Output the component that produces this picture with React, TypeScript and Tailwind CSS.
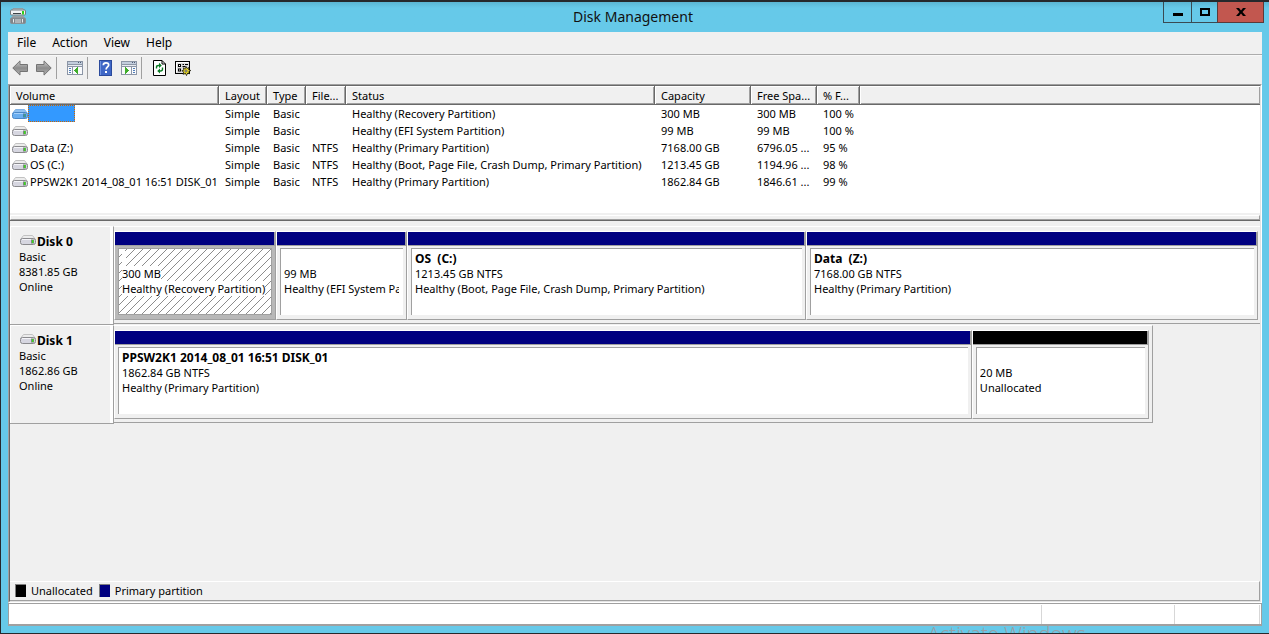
import type { ReactNode } from "react";
import { clsx } from "clsx";

const MENUS = ["File", "Action", "View", "Help"] as const;

const COLUMNS = [
  { label: "Volume", width: "w-[209px]" },
  { label: "Layout", width: "w-[48px]" },
  { label: "Type", width: "w-[39px]" },
  { label: "File...", width: "w-[40px]" },
  { label: "Status", width: "w-[309px]" },
  { label: "Capacity", width: "w-[96px]" },
  { label: "Free Spa...", width: "w-[66px]" },
  { label: "% F...", width: "w-[43px]" },
] as const;

const VOLUMES = [
  { name: "", cells: ["Simple", "Basic", "", "Healthy (Recovery Partition)", "300 MB", "300 MB", "100 %"], selected: true },
  { name: "", cells: ["Simple", "Basic", "", "Healthy (EFI System Partition)", "99 MB", "99 MB", "100 %"] },
  { name: "Data (Z:)", cells: ["Simple", "Basic", "NTFS", "Healthy (Primary Partition)", "7168.00 GB", "6796.05 ...", "95 %"] },
  { name: "OS (C:)", cells: ["Simple", "Basic", "NTFS", "Healthy (Boot, Page File, Crash Dump, Primary Partition)", "1213.45 GB", "1194.96 ...", "98 %"] },
  { name: "PPSW2K1 2014_08_01 16:51 DISK_01", cells: ["Simple", "Basic", "NTFS", "Healthy (Primary Partition)", "1862.84 GB", "1846.61 ...", "99 %"] },
];

type Partition = {
  name?: string;
  size: string;
  status: string;
  grow: string;
  selected?: boolean;
  unallocated?: boolean;
};

type Disk = {
  name: string;
  size: string;
  width: string;
  partitions: Partition[];
};

const DISKS: Disk[] = [
  {
    name: "Disk 0",
    size: "8381.85 GB",
    width: "w-full pr-[2px]",
    partitions: [
      { size: "300 MB", status: "Healthy (Recovery Partition)", grow: "grow-160", selected: true },
      { size: "99 MB", status: "Healthy (EFI System Partition)", grow: "grow-129" },
      { name: "OS  (C:)", size: "1213.45 GB NTFS", status: "Healthy (Boot, Page File, Crash Dump, Primary Partition)", grow: "grow-397" },
      { name: "Data  (Z:)", size: "7168.00 GB NTFS", status: "Healthy (Primary Partition)", grow: "grow-450" },
    ],
  },
  {
    name: "Disk 1",
    size: "1862.86 GB",
    width: "w-[90.7%] border-r border-r-[#a0a0a0] pr-[3px]",
    partitions: [
      { name: "PPSW2K1 2014_08_01 16:51 DISK_01", size: "1862.84 GB NTFS", status: "Healthy (Primary Partition)", grow: "grow-858" },
      { size: "20 MB", status: "Unallocated", grow: "grow-176", unallocated: true },
    ],
  },
];

function DriveIcon({ selected = false }: { selected?: boolean }) {
  return (
    <svg width="16" height="10" viewBox="0 0 16 10" className="shrink-0" aria-hidden="true">
      <path d="M3.500 .5h9l3 4H.5z" fill={selected ? "#8fc0f0" : "#ececec"} stroke={selected ? "#7fb2e6" : "#c2c2c2"} strokeLinejoin="round" />
      <rect x=".5" y="3.500" width="15" height="6" rx="2" fill={selected ? "#6aaef0" : "#d6d6e0"} stroke={selected ? "#4a88c8" : "#8a8a8e"} />
      <path d="M2 4.500h12" stroke={selected ? "#a5d0fa" : "#f4f4f8"} />
      <rect x="11" y="4.500" width="3" height="4" fill={selected ? "#4a7fb0" : "#7d8a80"} />
      <rect x="12" y="5" width="1.500" height="3" fill={selected ? "#3da38a" : "#3bd51f"} />
    </svg>
  );
}

function AppIcon() {
  return (
    <svg width="16" height="16" viewBox="0 0 16 16" aria-hidden="true">
      <path d="M3 .5h10l2 2.500H1z" fill="#c9ced2" stroke="#8b9298" strokeWidth=".8" />
      <rect x=".5" y="2" width="15" height="5" rx="1" fill="#f2f3f5" stroke="#747a7e" />
      <path d="M3 5.500h8" stroke="#3d4347" />
      <rect x="12" y="3" width="2" height="3.500" fill="#2fd01c" />
      <path d="M3 7.500h10l2 2.500H1z" fill="#9ba0a4" />
      <rect x=".5" y="10" width="15" height="5.500" rx="1" fill="#7f858a" stroke="#8a9095" />
      <path d="M5 12h6M5 14h6" stroke="#dfe3e6" />
      <path d="M3.500 11v3.500M12.500 11v3.500" stroke="#e9ecee" />
    </svg>
  );
}

function ArrowIcon({ forward = false }: { forward?: boolean }) {
  return (
    <svg width="16" height="16" viewBox="0 0 16 16" className={clsx("shrink-0", forward && "-scale-x-100")} aria-hidden="true">
      <defs>
        <linearGradient id={forward ? "fwd" : "back"} x1="0" y1="0" x2="0" y2="1">
          <stop offset="0" stopColor="#d0d0d0" />
          <stop offset=".5" stopColor="#8c8c8c" />
          <stop offset="1" stopColor="#b4b4b4" />
        </linearGradient>
      </defs>
      <path d="M.8 8 8 .9v3.600h7.500v7H8v3.600z" fill={forward ? "url(#fwd)" : "url(#back)"} stroke="#747474" strokeLinejoin="round" />
    </svg>
  );
}

function PaneIcon({ right = false }: { right?: boolean }) {
  return (
    <svg width="16" height="14" viewBox="0 0 16 14" shapeRendering="crispEdges" aria-hidden="true">
      <rect width="16" height="14" fill="#8c96a6" />
      <rect x="1" y="1" width="14" height="2" fill="#c3cedd" />
      <path d="M11 1h1v1h-1zM13 1h1v1h-1z" fill="#4d5c74" />
      <rect x="1" y="4" width="14" height="1" fill="#e8ecf2" />
      <rect x="1" y="6" width="14" height="7" fill="#f9fafc" />
      {right ? (
        <>
          <path d="M10 6h1v7h-1z" fill="#8c96a6" />
          <path d="M12 7h2v1h-2zM12 9h2v1h-2zM12 11h2v1h-2z" fill="#4f7db8" />
          <path d="M4 6v7l4-3.500z" fill="#3fae2a" />
        </>
      ) : (
        <>
          <path d="M5 6h1v7H5z" fill="#8c96a6" />
          <path d="M2 7h2v1H2zM2 9h2v1H2zM2 11h2v1H2z" fill="#4f7db8" />
          <path d="M11 6v7L7 9.500z" fill="#3fae2a" />
        </>
      )}
    </svg>
  );
}

function HelpIcon() {
  return (
    <svg width="13" height="16" viewBox="0 0 13 16" aria-hidden="true">
      <rect x=".5" y=".5" width="12" height="15" fill="#3f67c6" stroke="#2b4a9c" />
      <path d="M1.500 1v14" stroke="#6f92e0" />
      <path d="M4.300 5.200c0-1.500 1-2.400 2.700-2.400s2.700.8 2.700 2.100c0 1.900-2.600 2-2.600 4.600" fill="none" stroke="#fff" strokeWidth="1.700" />
      <rect x="6" y="11" width="2" height="2" fill="#fff" />
    </svg>
  );
}

function RefreshIcon() {
  return (
    <svg width="13" height="16" viewBox="0 0 13 16" aria-hidden="true">
      <path d="M.5.5h8.500l3.500 3.500v11.500H.5z" fill="#fff" stroke="#000" />
      <path d="M9 .5V4h3.500" fill="none" stroke="#000" />
      <path d="M3.500 8.500V7.200c0-1.200.7-1.700 2-1.700H7M9.500 7.500v1.600c0 1.200-.7 1.900-2 1.900H6" fill="none" stroke="#0b7d24" strokeWidth="1.400" />
      <path d="M6 2.800v5.200l2.800-2.600zM7 8.400v5.200L4.200 11z" fill="#0b7d24" />
    </svg>
  );
}

function SettingsIcon() {
  return (
    <svg width="16" height="16" viewBox="0 0 16 16" aria-hidden="true">
      <rect x=".5" y="1.500" width="14" height="12" fill="#dcdcdc" stroke="#000" />
      <path d="M1.500 12.500v-10h12" fill="none" stroke="#fff" />
      <path d="M3 4h3v3H3zM3 8.500h3v3H3z" fill="#000" />
      <path d="M4 5h1v1H4zM4 9.500h1v1H4z" fill="#fff" />
      <path d="M7.500 4.500h1.500M10 4.500h3M7.500 6.500h3" stroke="#000" />
      <path d="m11 6.500 1 2 2-1-.5 2.200 2.300.8-2.100 1.200.9 2.100-2.100-.5-1 2.300-1-2.100-2.400.8.7-2.300-2-1.200 2.200-.8-.7-2.200 2.100.8z" fill="#f6e532" stroke="#000" strokeWidth=".7" />
      <circle cx="11" cy="11" r="1.100" fill="#fff" stroke="#000" strokeWidth=".6" />
    </svg>
  );
}

function ToolButton({ label, children }: { label: string; children: ReactNode }) {
  return (
    <button type="button" aria-label={label} className="flex h-6 w-6 items-center justify-center">
      {children}
    </button>
  );
}

function ToolDivider() {
  return <div className="h-[22px] w-px bg-[#a0a0a0]" />;
}

function TitleBar() {
  return (
    <header className="grid h-[30px] grid-cols-[1fr_auto_1fr] bg-linear-to-b from-[#5bb5d3] to-[#66c9e9] to-20% pr-[5px] pl-[1px]">
      <div className="pt-[6px] pl-2">
        <AppIcon />
      </div>
      <h1 className="text-[14px] leading-[30px] text-[#111]">Disk Management</h1>
      <div className="flex h-[21px] justify-end">
        <button type="button" aria-label="Minimize" className="flex w-[29px] items-center justify-center border border-t-0 border-[#3a4a52]">
          <svg width="10" height="9" viewBox="0 0 10 9" shapeRendering="crispEdges">
            <path d="M0 5h10v3H0z" />
          </svg>
        </button>
        <button type="button" aria-label="Maximize" className="flex w-[25px] items-center justify-center border-b border-[#3a4a52]">
          <svg width="10" height="8" viewBox="0 0 10 8" shapeRendering="crispEdges">
            <path d="M1 1h8v6H1z" fill="none" stroke="#000" strokeWidth="2" />
          </svg>
        </button>
        <button type="button" aria-label="Close" className="flex w-[47px] items-center justify-center border border-t-0 border-[#5a3a3a] bg-[#c2574f]">
          <svg width="10" height="8" viewBox="0 0 10 8">
            <path d="M0 0h3l2 2.500L7 0h3L6.500 4 10 8H7L5 5.500 3 8H0l3.500-4z" />
          </svg>
        </button>
      </div>
    </header>
  );
}

function Toolbar() {
  return (
    <div className="flex h-[29px] items-center border-t border-[#f8f8f8] pb-[5px]">
      <ToolButton label="Back"><ArrowIcon /></ToolButton>
      <ToolButton label="Forward"><ArrowIcon forward /></ToolButton>
      <ToolDivider />
      <div className="flex pl-[6px]">
        <ToolButton label="Show console tree"><PaneIcon /></ToolButton>
      </div>
      <ToolDivider />
      <div className="flex pl-[5px]">
        <ToolButton label="Help"><HelpIcon /></ToolButton>
        <ToolButton label="Show action pane"><PaneIcon right /></ToolButton>
      </div>
      <ToolDivider />
      <div className="flex pl-[5px]">
        <ToolButton label="Refresh"><RefreshIcon /></ToolButton>
        <ToolButton label="Settings"><SettingsIcon /></ToolButton>
      </div>
    </div>
  );
}

function VolumeTable() {
  const th =
    "h-[19px] overflow-hidden border-b border-[#696969] bg-[#f0f0f0] p-0 pl-[6px] text-left font-normal whitespace-nowrap shadow-[inset_1px_1px_0_#fff,inset_-1px_-1px_0_#a0a0a0]";
  return (
    <div className="bg-white pb-[23px]">
      <table className="w-full table-fixed border-separate border-spacing-0 leading-[17px]">
        <thead>
          <tr>
            {COLUMNS.map((col) => (
              <th key={col.label} className={clsx(th, "border-r", col.width)}>{col.label}</th>
            ))}
            <th aria-hidden="true" className={th} />
          </tr>
        </thead>
        <tbody>
          {VOLUMES.map((vol, i) => (
            <tr key={i}>
              <td className="p-0">
                <div className="flex h-[17px] items-center pl-[2px] whitespace-nowrap">
                  <DriveIcon selected={vol.selected} />
                  <span className={clsx("h-[17px] pl-[2px]", vol.selected && "w-[47px] border border-dotted border-[#cc6600] bg-[#3399ff]")}>
                    {vol.name}
                  </span>
                </div>
              </td>
              {vol.cells.map((cell, j) => (
                <td key={j} className="p-0 pl-[6px] whitespace-nowrap">{cell}</td>
              ))}
              <td />
            </tr>
          ))}
        </tbody>
      </table>
    </div>
  );
}

function Hatch() {
  return (
    <svg className="absolute inset-0 h-full w-full" aria-hidden="true">
      <defs>
        <pattern id="hatch" width="8" height="8" patternUnits="userSpaceOnUse">
          <path d="M-1 9 9-1" stroke="#8c8c8c" shapeRendering="crispEdges" />
        </pattern>
      </defs>
      <rect width="100%" height="100%" fill="url(#hatch)" />
    </svg>
  );
}

function PartitionBox({ name, size, status, grow, selected, unallocated }: Partition) {
  const line = "relative w-fit min-w-1 whitespace-pre bg-white";
  return (
    <div className={clsx("flex min-w-0 basis-0 flex-col border border-[#a0a0a0] border-t-white border-l-white", grow)}>
      <div className={clsx("h-[14px] border-r border-b border-[#a0a0a0]", unallocated ? "bg-black" : "bg-[#000080]")} />
      <div className={clsx("px-[3px] pt-[2px] pb-[4px]", selected && "bg-[#b8b8b8]")}>
        <div className={clsx("relative h-[67px] overflow-hidden border-t border-l border-[#a0a0a0] bg-white pt-[2px] pr-1 pl-[3px]", selected && "border-r border-b")}>
          {selected && <Hatch />}
          <div className="overflow-hidden">
            <p className={clsx(line, "h-[15px] text-[12px] font-bold")}>{name}</p>
            <p className={line}>{size}</p>
            <p className={line}>{status}</p>
          </div>
        </div>
      </div>
    </div>
  );
}

function DiskRow({ disk }: { disk: Disk }) {
  return (
    <section className="flex">
      <div className="w-[104px] shrink-0 border-t border-r border-b border-t-white border-r-[#a0a0a0] border-b-[#a0a0a0]">
        <div className="h-full border-r-3 border-l border-white pt-[7px] pl-[8px]">
          <h2 className="flex items-center text-[12px] font-bold">
            <span className="px-px pb-1"><DriveIcon /></span>
            {disk.name}
          </h2>
          <p>Basic</p>
          <p>{disk.size}</p>
          <p>Online</p>
        </div>
      </div>
      <div className="mb-px min-w-0 flex-1">
        <div className={clsx("flex border-t border-b border-t-white border-b-[#a0a0a0] pt-[4px] pb-[3px]", disk.width)}>
          {disk.partitions.map((part) => (
            <PartitionBox key={part.size} {...part} />
          ))}
        </div>
      </div>
    </section>
  );
}

function Legend() {
  return (
    <footer className="flex h-[20px] items-center border-t border-r border-b border-t-white border-r-[#a0a0a0] border-b-[#a0a0a0] pb-px pl-[5px]">
      <span className="mr-[5px] h-[13px] w-[11px] border-t border-l border-[#808080] bg-black" />
      <span className="mr-[6px]">Unallocated</span>
      <span className="mr-[5px] h-[13px] w-[11px] border-t border-l border-[#808080] bg-[#000080]" />
      <span>Primary partition</span>
    </footer>
  );
}

export default function App() {
  return (
    <div className="relative flex h-screen flex-col overflow-hidden border-t-2 border-b border-l border-[#26282c] bg-[#66c9e9] pb-[7px] font-['Noto_Sans',sans-serif] text-[11px] leading-[15px] text-black">
      <TitleBar />
      <main className="mx-[7px] flex min-h-0 flex-1 flex-col bg-[#f0f0f0]">
        <nav className="flex h-[23px] items-center border-b border-[#acacac] pb-px pl-[1px]">
          {MENUS.map((menu) => (
            <button key={menu} type="button" className="px-2 text-[12px]">{menu}</button>
          ))}
        </nav>
        <Toolbar />
        <div className="flex min-h-0 flex-1 flex-col border border-white border-t-[#a0a0a0] border-l-[#a0a0a0]">
          <div className="flex min-h-0 flex-1 flex-col border border-[#e3e3e3] border-t-[#696969] border-l-[#696969]">
            <VolumeTable />
            <div className="border-b border-[#696969] pt-[2px]">
              <div className="h-[5px] border border-white border-r-[#a0a0a0] border-b-[#a0a0a0]" />
            </div>
            <div className="min-h-0 flex-1 pt-[5px]">
              {DISKS.map((disk) => (
                <DiskRow key={disk.name} disk={disk} />
              ))}
            </div>
            <Legend />
          </div>
        </div>
        <div className="flex h-[23px] justify-end border border-b-2 border-[#a0a0a0] bg-white pt-px pr-px">
          <div className="w-[133px] border-l border-[#d7d7d7]" />
          <div className="w-[86px] border-r border-l border-[#d7d7d7]" />
        </div>
      </main>
      <p className="absolute right-[183px] -bottom-[15px] text-[20px] leading-[28px] font-light text-[#98a0a6]">Activate Windows</p>
    </div>
  );
}
